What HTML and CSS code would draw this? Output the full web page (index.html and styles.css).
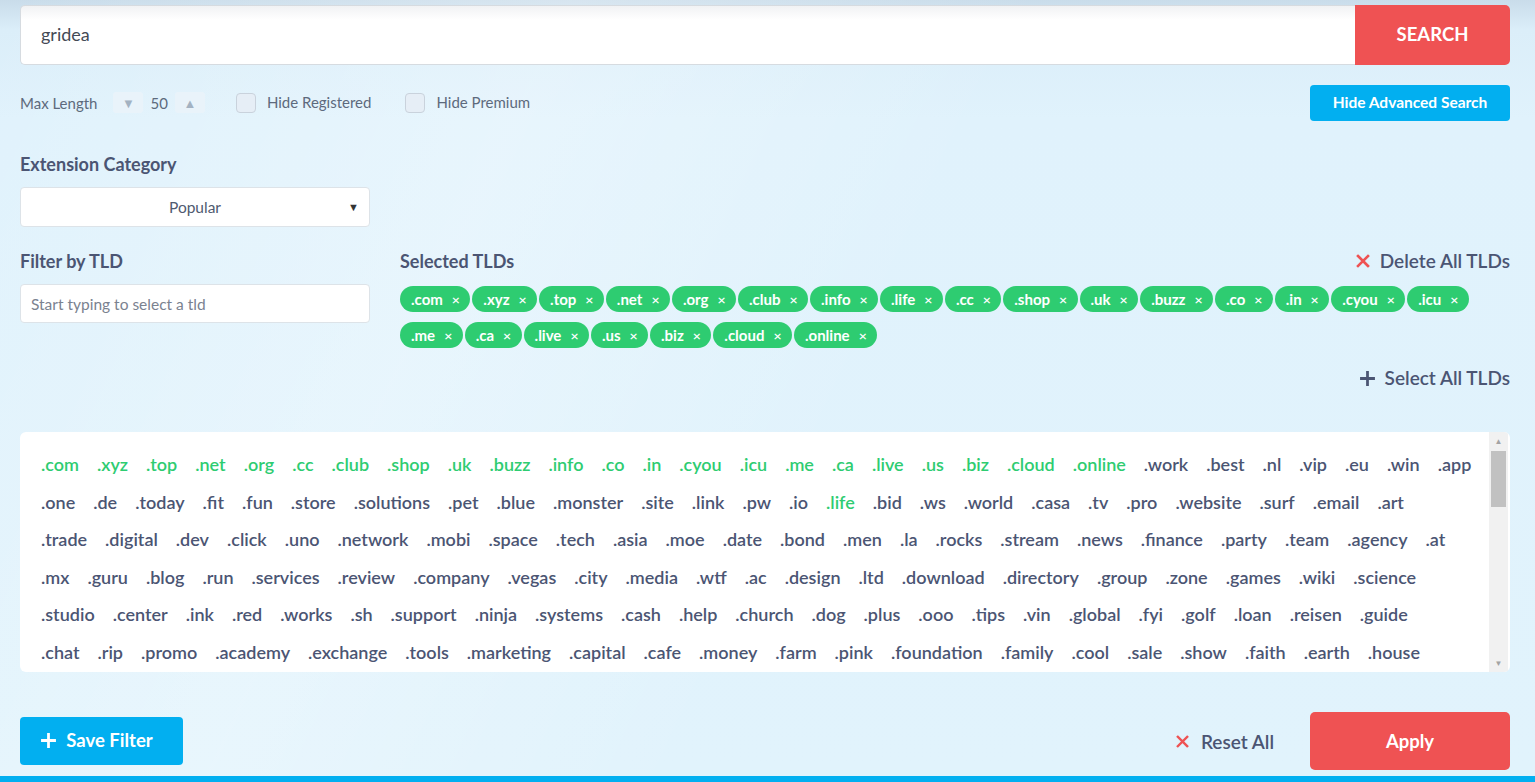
FILE: index.html
```html
<!DOCTYPE html>
<html lang="en">
<head>
<meta charset="utf-8">
<title>Domain Search</title>
<link rel="stylesheet" href="styles.css">
</head>
<body>
<div class="page">
  <div class="search-row">
    <div class="search-input">gridea</div>
    <button class="search-btn">SEARCH</button>
  </div>

  <div class="options-row">
    <div class="opts">
      <span class="ml-label">Max Length</span>
      <span class="spin">&#9660;</span>
      <span class="ml-val">50</span>
      <span class="spin">&#9650;</span>
      <label class="chk"><span class="box"></span>Hide Registered</label>
      <label class="chk"><span class="box"></span>Hide Premium</label>
    </div>
    <button class="adv-btn">Hide Advanced Search</button>
  </div>

  <div class="section-label cat-label">Extension Category</div>
  <div class="select"><span>Popular</span><span class="caret">&#9660;</span></div>

  <div class="filters">
    <div class="col-left">
      <div class="section-label">Filter by TLD</div>
      <div class="text-input">Start typing to select a tld</div>
    </div>
    <div class="col-right">
      <div class="sel-head">
        <span class="section-label">Selected TLDs</span>
        <span class="link-action"><svg class="ico-x" viewBox="0 0 14 14" width="14" height="14"><path d="M2 2 L12 12 M12 2 L2 12" stroke="#ee5253" stroke-width="2.6" stroke-linecap="square" fill="none"/></svg>Delete All TLDs</span>
      </div>
      <div class="chips">
        <span class="chip">.com<i>&times;</i></span><span class="chip">.xyz<i>&times;</i></span><span class="chip">.top<i>&times;</i></span><span class="chip">.net<i>&times;</i></span><span class="chip">.org<i>&times;</i></span><span class="chip">.club<i>&times;</i></span><span class="chip">.info<i>&times;</i></span><span class="chip">.life<i>&times;</i></span><span class="chip">.cc<i>&times;</i></span><span class="chip">.shop<i>&times;</i></span><span class="chip">.uk<i>&times;</i></span><span class="chip">.buzz<i>&times;</i></span><span class="chip">.co<i>&times;</i></span><span class="chip">.in<i>&times;</i></span><span class="chip">.cyou<i>&times;</i></span><span class="chip">.icu<i>&times;</i></span><span class="chip">.me<i>&times;</i></span><span class="chip">.ca<i>&times;</i></span><span class="chip">.live<i>&times;</i></span><span class="chip">.us<i>&times;</i></span><span class="chip">.biz<i>&times;</i></span><span class="chip">.cloud<i>&times;</i></span><span class="chip">.online<i>&times;</i></span>
      </div>
      <div class="sel-foot">
        <span class="link-action"><svg class="ico-plus" viewBox="0 0 16 16" width="17" height="17"><path d="M8 1 V15 M1 8 H15" stroke="#4b5573" stroke-width="2.6" fill="none"/></svg>Select All TLDs</span>
      </div>
    </div>
  </div>

  <div class="tld-box">
    <div class="tld-list">
      <div class="tld-row"><span class="tld on">.com</span><span class="tld on">.xyz</span><span class="tld on">.top</span><span class="tld on">.net</span><span class="tld on">.org</span><span class="tld on">.cc</span><span class="tld on">.club</span><span class="tld on">.shop</span><span class="tld on">.uk</span><span class="tld on">.buzz</span><span class="tld on">.info</span><span class="tld on">.co</span><span class="tld on">.in</span><span class="tld on">.cyou</span><span class="tld on">.icu</span><span class="tld on">.me</span><span class="tld on">.ca</span><span class="tld on">.live</span><span class="tld on">.us</span><span class="tld on">.biz</span><span class="tld on">.cloud</span><span class="tld on">.online</span><span class="tld">.work</span><span class="tld">.best</span><span class="tld">.nl</span><span class="tld">.vip</span><span class="tld">.eu</span><span class="tld">.win</span><span class="tld">.app</span></div>
      <div class="tld-row"><span class="tld">.one</span><span class="tld">.de</span><span class="tld">.today</span><span class="tld">.fit</span><span class="tld">.fun</span><span class="tld">.store</span><span class="tld">.solutions</span><span class="tld">.pet</span><span class="tld">.blue</span><span class="tld">.monster</span><span class="tld">.site</span><span class="tld">.link</span><span class="tld">.pw</span><span class="tld">.io</span><span class="tld on">.life</span><span class="tld">.bid</span><span class="tld">.ws</span><span class="tld">.world</span><span class="tld">.casa</span><span class="tld">.tv</span><span class="tld">.pro</span><span class="tld">.website</span><span class="tld">.surf</span><span class="tld">.email</span><span class="tld">.art</span></div>
      <div class="tld-row"><span class="tld">.trade</span><span class="tld">.digital</span><span class="tld">.dev</span><span class="tld">.click</span><span class="tld">.uno</span><span class="tld">.network</span><span class="tld">.mobi</span><span class="tld">.space</span><span class="tld">.tech</span><span class="tld">.asia</span><span class="tld">.moe</span><span class="tld">.date</span><span class="tld">.bond</span><span class="tld">.men</span><span class="tld">.la</span><span class="tld">.rocks</span><span class="tld">.stream</span><span class="tld">.news</span><span class="tld">.finance</span><span class="tld">.party</span><span class="tld">.team</span><span class="tld">.agency</span><span class="tld">.at</span></div>
      <div class="tld-row"><span class="tld">.mx</span><span class="tld">.guru</span><span class="tld">.blog</span><span class="tld">.run</span><span class="tld">.services</span><span class="tld">.review</span><span class="tld">.company</span><span class="tld">.vegas</span><span class="tld">.city</span><span class="tld">.media</span><span class="tld">.wtf</span><span class="tld">.ac</span><span class="tld">.design</span><span class="tld">.ltd</span><span class="tld">.download</span><span class="tld">.directory</span><span class="tld">.group</span><span class="tld">.zone</span><span class="tld">.games</span><span class="tld">.wiki</span><span class="tld">.science</span></div>
      <div class="tld-row"><span class="tld">.studio</span><span class="tld">.center</span><span class="tld">.ink</span><span class="tld">.red</span><span class="tld">.works</span><span class="tld">.sh</span><span class="tld">.support</span><span class="tld">.ninja</span><span class="tld">.systems</span><span class="tld">.cash</span><span class="tld">.help</span><span class="tld">.church</span><span class="tld">.dog</span><span class="tld">.plus</span><span class="tld">.ooo</span><span class="tld">.tips</span><span class="tld">.vin</span><span class="tld">.global</span><span class="tld">.fyi</span><span class="tld">.golf</span><span class="tld">.loan</span><span class="tld">.reisen</span><span class="tld">.guide</span></div>
      <div class="tld-row"><span class="tld">.chat</span><span class="tld">.rip</span><span class="tld">.promo</span><span class="tld">.academy</span><span class="tld">.exchange</span><span class="tld">.tools</span><span class="tld">.marketing</span><span class="tld">.capital</span><span class="tld">.cafe</span><span class="tld">.money</span><span class="tld">.farm</span><span class="tld">.pink</span><span class="tld">.foundation</span><span class="tld">.family</span><span class="tld">.cool</span><span class="tld">.sale</span><span class="tld">.show</span><span class="tld">.faith</span><span class="tld">.earth</span><span class="tld">.house</span></div>
    </div>
    <div class="scrollbar">
      <span class="sb-arrow">&#9650;</span>
      <span class="sb-thumb"></span>
      <span class="sb-track"></span>
      <span class="sb-arrow">&#9660;</span>
    </div>
  </div>

  <div class="footer">
    <button class="save-btn"><svg viewBox="0 0 16 16" width="17" height="17"><path d="M8 1 V15 M1 8 H15" stroke="#fff" stroke-width="2.6" fill="none"/></svg>Save Filter</button>
    <div class="footer-right">
      <span class="reset"><svg viewBox="0 0 14 14" width="13" height="13"><path d="M2 2 L12 12 M12 2 L2 12" stroke="#ee5253" stroke-width="2.6" stroke-linecap="square" fill="none"/></svg>Reset All</span>
      <button class="apply-btn">Apply</button>
    </div>
  </div>
</div>
<div class="bottom-bar"></div>
</body>
</html>
```

FILE: styles.css
```css
* { box-sizing: border-box; }
html, body { margin: 0; padding: 0; }
body {
  width: 1535px;
  height: 782px;
  overflow: hidden;
  font-family: "Lato", "Noto Sans", sans-serif;
  color: #4b5573;
  background:
    linear-gradient(115deg, rgba(255,255,255,0) 0%, rgba(255,255,255,0.25) 30%, rgba(255,255,255,0) 55%),
    linear-gradient(to bottom, #c9dcea 0px, #dbeef9 30px, #e0f2fc 120px, #e1f3fc 100%);
  display: flex;
  flex-direction: column;
}
.page {
  flex: 1;
  padding: 5px 25px 0 20px;
  display: flex;
  flex-direction: column;
}
button { font-family: inherit; border: 0; cursor: pointer; }

/* search */
.search-row { display: flex; height: 60px; }
.search-input {
  flex: 1;
  background: linear-gradient(to bottom, #f1f2f4 0, #ffffff 14px);
  border: 1px solid #d6dbe0;
  border-right: 0;
  border-radius: 5px 0 0 5px;
  font-size: 18px;
  color: #444a55;
  padding: 0 20px 3px;
  display: flex;
  align-items: center;
}
.search-btn {
  width: 155px;
  background: #ef5253;
  color: #fff;
  font-size: 18.5px;
  font-weight: 700;
  border-radius: 0 5px 5px 0;
  padding-bottom: 4px;
}

/* options */
.options-row {
  margin-top: 20px;
  height: 36px;
  display: flex;
  align-items: center;
  justify-content: space-between;
}
.opts { display: flex; align-items: center; font-size: 15px; color: #5d6a7d; padding-bottom: 3px; }
.ml-label { margin-right: 16px; margin-top: 3px; }
.spin {
  width: 30px; height: 21px;
  background: #e9f3fa;
  border-radius: 3px;
  color: #a3b2c2;
  font-size: 13px;
  display: flex; align-items: center; justify-content: center;
  margin-top: 2px;
}
.ml-val { margin: 0 7px; font-size: 15px; margin-top: 2px; }
.chk { display: flex; align-items: center; margin-left: 31px; }
.chk + .chk { margin-left: 34px; }
.box {
  width: 20px; height: 20px;
  border: 1px solid #c9d2dc;
  background: #e6eef6;
  border-radius: 4px;
  margin-right: 11px;
  margin-top: 2px;
}
.adv-btn {
  width: 200px;
  height: 36px;
  background: #02aff0;
  color: #fff;
  font-size: 15.5px;
  font-weight: 700;
  border-radius: 4px;
  padding-bottom: 3px;
}

/* labels */
.section-label { font-size: 18px; font-weight: 700; line-height: 24px; color: #4b5573; }
.cat-label { margin-top: 31px; }
.select {
  margin-top: 11px;
  width: 350px;
  height: 40px;
  background: #fff;
  border: 1px solid #dde3e8;
  border-radius: 4px;
  display: flex;
  align-items: center;
  justify-content: center;
  position: relative;
  font-size: 15.5px;
  color: #4f5a70;
}
.caret { position: absolute; right: 10px; font-size: 11px; color: #333; top: 12px; }

/* filters */
.filters { margin-top: 22px; display: flex; gap: 30px; }
.col-left { width: 350px; }
.text-input {
  margin-top: 11px;
  height: 39px;
  background: #fff;
  border: 1px solid #dde3e8;
  border-radius: 4px;
  font-size: 15.5px;
  color: #7a8290;
  padding: 0 10px;
  display: flex;
  align-items: center;
}
.col-right { flex: 1; }
.sel-head { display: flex; justify-content: space-between; align-items: center; }
.link-action { display: flex; align-items: center; font-size: 19px; font-weight: 600; color: #4b5573; line-height: 24px; }
.ico-x { margin-right: 10px; }
.ico-plus { margin-right: 9px; }
.chips { margin-top: 13px; display: flex; flex-wrap: wrap; column-gap: 2px; row-gap: 10px; }
.chip {
  height: 26px;
  padding: 0 10.4px 0 11px;
  background: #2ecc71;
  color: #fff;
  border-radius: 13px;
  font-size: 15px;
  font-weight: 700;
  display: flex;
  align-items: center;
}
.chip i { font-style: normal; font-size: 14px; margin-left: 9px; font-weight: 600; }
.sel-foot { margin-top: 18px; display: flex; justify-content: flex-end; }

/* tld list */
.tld-box {
  margin-top: 42px;
  height: 240px;
  background: #fff;
  border-radius: 6px;
  display: flex;
  overflow: hidden;
}
.tld-list {
  flex: 1;
  padding: 14px 0 0 21px;
  display: flex;
  flex-direction: column;
  overflow: hidden;
}
.tld-row { display: flex; column-gap: 18px; }
.tld {
  font-size: 18px;
  font-weight: 600;
  line-height: 37.5px;
  color: #4b5573;
  white-space: nowrap;
}
.tld.on { color: #2ecc71; }
.scrollbar {
  width: 19px;
  margin-right: 2px;
  background: #f1f1f1;
  display: flex;
  flex-direction: column;
}
.sb-arrow { height: 18px; font-size: 8px; color: #a3a3a3; display: flex; align-items: center; justify-content: center; }
.sb-thumb { height: 56px; margin: 1px 2px; background: #c1c1c1; }
.sb-track { flex: 1; }

/* footer */
.footer { margin-top: 40px; height: 58px; display: flex; align-items: center; justify-content: space-between; }
.save-btn {
  width: 163px;
  height: 48px;
  background: #02aff0;
  color: #fff;
  font-size: 18.5px;
  font-weight: 700;
  border-radius: 4px;
  display: flex;
  align-items: center;
  justify-content: center;
  padding: 0 10px 2px 0;
}
.save-btn svg { margin-right: 9px; }
.footer-right { display: flex; align-items: center; }
.reset { display: flex; align-items: center; font-size: 19px; font-weight: 600; color: #4b5573; margin-right: 36px; }
.reset svg { margin-right: 12px; }
.apply-btn {
  width: 200px;
  height: 58px;
  background: #ef5253;
  color: #fff;
  font-size: 18.5px;
  font-weight: 700;
  border-radius: 5px;
  padding-bottom: 2px;
}
.bottom-bar { height: 6px; background: #02aff0; }
```
